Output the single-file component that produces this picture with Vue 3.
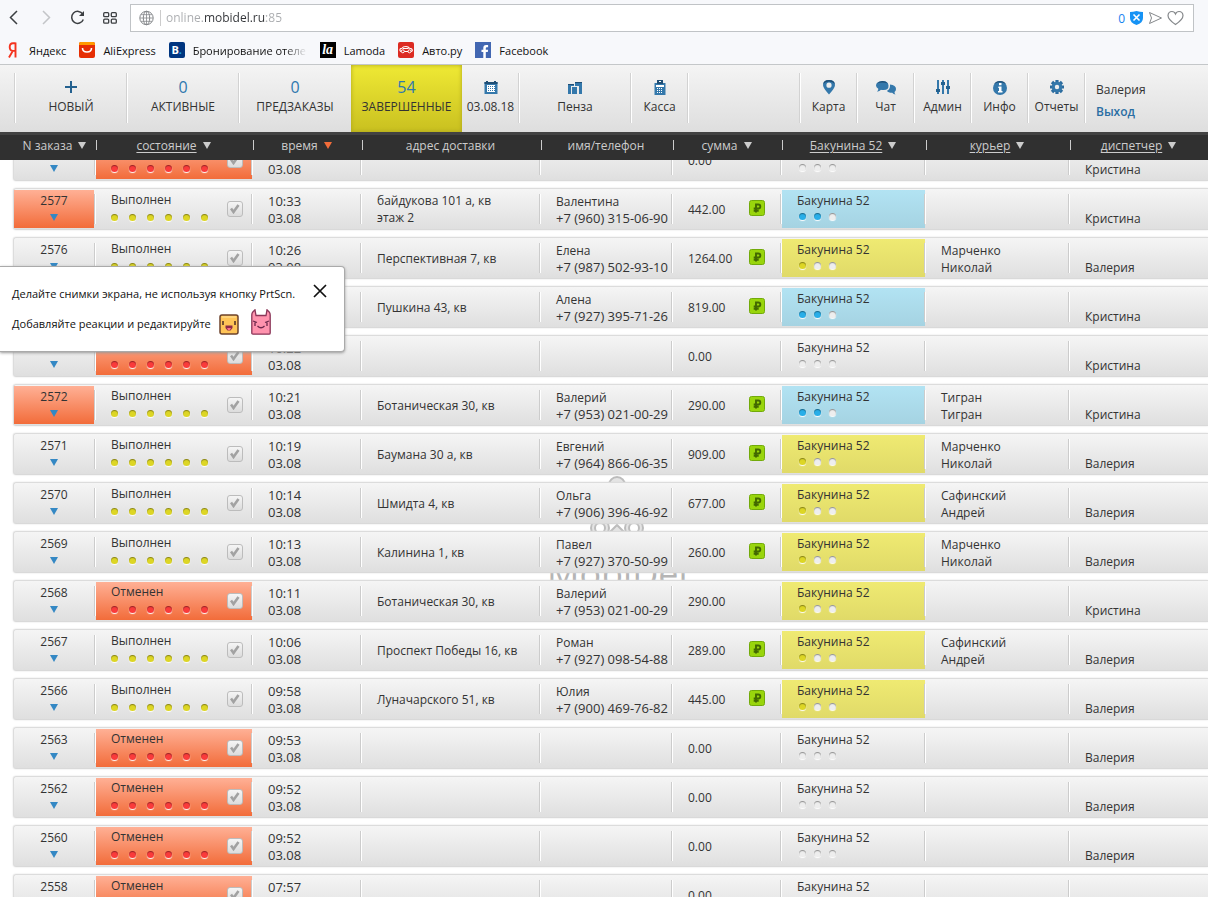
<script setup>
import { ref } from 'vue'

const address = ref('online.mobidel.ru:85')

const bookmarks = [
  { icon: 'yandex', text: 'Яндекс' },
  { icon: 'ali', text: 'AliExpress' },
  { icon: 'booking', text: 'Бронирование отелей', cut: true },
  { icon: 'lamoda', text: 'Lamoda' },
  { icon: 'auto', text: 'Авто.ру' },
  { icon: 'facebook', text: 'Facebook' }
]

const tools = [
  { icon: 'pin', text: 'Карта' },
  { icon: 'chat', text: 'Чат' },
  { icon: 'sliders', text: 'Админ' },
  { icon: 'info', text: 'Инфо' },
  { icon: 'gear', text: 'Отчеты' }
]

const columns = [
  { text: 'N заказа', sort: true },
  { text: 'состояние', sort: true, link: true },
  { text: 'время', sort: true, active: true },
  { text: 'адрес доставки' },
  { text: 'имя/телефон' },
  { text: 'сумма', sort: true },
  { text: 'Бакунина 52', sort: true, link: true },
  { text: 'курьер', sort: true, link: true },
  { text: 'диспетчер', sort: true, link: true }
]

const make = (id, done, time, address, client, phone, sum, paid, tone, lit, courier, operator, hot = false) => ({
  id, done, time, address, client, phone, sum, paid, tone, lit, courier, operator, hot
})

const orders = [
  make(2578, false, '10:35', '', '', '', '0.00', false, '', 0, '', 'Кристина'),
  make(2577, true, '10:33', 'байдукова 101 а, кв\nэтаж 2', 'Валентина', '+7 (960) 315-06-90', '442.00', true, 'blue', 2, '', 'Кристина', true),
  make(2576, true, '10:26', 'Перспективная 7, кв', 'Елена', '+7 (987) 502-93-10', '1264.00', true, 'yellow', 1, 'Марченко\nНиколай', 'Валерия'),
  make(2575, true, '10:24', 'Пушкина 43, кв', 'Алена', '+7 (927) 395-71-26', '819.00', true, 'blue', 2, '', 'Кристина'),
  make(2573, false, '10:22', '', '', '', '0.00', false, '', 0, '', 'Кристина'),
  make(2572, true, '10:21', 'Ботаническая 30, кв', 'Валерий', '+7 (953) 021-00-29', '290.00', true, 'blue', 2, 'Тигран\nТигран', 'Кристина', true),
  make(2571, true, '10:19', 'Баумана 30 а, кв', 'Евгений', '+7 (964) 866-06-35', '909.00', true, 'yellow', 1, 'Марченко\nНиколай', 'Валерия'),
  make(2570, true, '10:14', 'Шмидта 4, кв', 'Ольга', '+7 (906) 396-46-92', '677.00', true, 'yellow', 1, 'Сафинский\nАндрей', 'Валерия'),
  make(2569, true, '10:13', 'Калинина 1, кв', 'Павел', '+7 (927) 370-50-99', '260.00', true, 'yellow', 1, 'Марченко\nНиколай', 'Валерия'),
  make(2568, false, '10:11', 'Ботаническая 30, кв', 'Валерий', '+7 (953) 021-00-29', '290.00', false, 'yellow', 1, '', 'Кристина'),
  make(2567, true, '10:06', 'Проспект Победы 16, кв', 'Роман', '+7 (927) 098-54-88', '289.00', true, 'yellow', 1, 'Сафинский\nАндрей', 'Валерия'),
  make(2566, true, '09:58', 'Луначарского 51, кв', 'Юлия', '+7 (900) 469-76-82', '445.00', true, 'yellow', 1, '', 'Валерия'),
  make(2563, false, '09:53', '', '', '', '0.00', false, '', 0, '', 'Валерия'),
  make(2562, false, '09:52', '', '', '', '0.00', false, '', 0, '', 'Валерия'),
  make(2560, false, '09:52', '', '', '', '0.00', false, '', 0, '', 'Валерия'),
  make(2558, false, '07:57', '', '', '', '0.00', false, '', 0, '', 'Валерия')
]

const noticeOpen = ref(true)
</script>

<template>
  <div class="page">
    <header class="browser">
      <div class="bar">
        <button class="chrome-btn" aria-label="Назад">
          <svg width="16" height="16" viewBox="0 0 16 16"><path d="M11 1 4.500 7.500 11 14" fill="none" stroke="#3c3f42" stroke-width="1.500" /></svg>
        </button>
        <button class="chrome-btn" aria-label="Вперёд">
          <svg width="16" height="16" viewBox="0 0 16 16"><path d="M5 1 11.500 7.500 5 14" fill="none" stroke="#c3c5c8" stroke-width="1.500" /></svg>
        </button>
        <button class="chrome-btn" aria-label="Обновить">
          <svg width="16" height="16" viewBox="0 0 16 16"><path d="M12.800 4.200A6 6 0 1 0 13.300 9.500" fill="none" stroke="#3c3f42" stroke-width="1.500" /><path d="M14 1v5H9z" fill="#3c3f42" /></svg>
        </button>
        <button class="chrome-btn" aria-label="Экспресс-панель">
          <svg width="16" height="16" viewBox="0 0 16 16" fill="none" stroke="#3c3f42" stroke-width="1.300"><rect x="1.700" y="2.700" width="5" height="4" rx="1" /><rect x="9.300" y="2.700" width="5" height="4" rx="1" /><rect x="1.700" y="9.200" width="5" height="4" rx="1" /><rect x="9.300" y="9.200" width="5" height="4" rx="1" /></svg>
        </button>
        <div class="address">
          <svg width="16" height="16" viewBox="0 0 16 16" fill="none" stroke="#85888b"><circle cx="7.500" cy="8" r="6.700" /><ellipse cx="7.500" cy="8" rx="3.200" ry="6.700" /><path d="M7.500 1v14M1 8h13M2 4.700h11M2 11.300h11" stroke-width=".8" /></svg>
          <input v-model="address" class="url" type="text" aria-label="Адрес">
          <span class="blocked">0</span>
          <svg width="15" height="16" viewBox="0 0 15 16"><path d="M1 2q3 0 6.500-1Q11 2 14 2v6q0 5-6.500 7Q1 13 1 8z" fill="#1693f5" /><path d="m4.500 4.500 6 6m0-6-6 6" stroke="#fff" stroke-width="1.600" /></svg>
          <svg width="15" height="16" viewBox="0 0 15 16"><path d="M1.500 2.500 13.500 8l-12 5.500L3.500 8z" fill="none" stroke="#85888b" /></svg>
          <svg width="17" height="16" viewBox="0 0 17 16"><path d="M8.500 14.500Q1 9.500 1 5.500 1.300 1.500 5 1.500q2.500 0 3.500 2.500 1-2.500 3.500-2.500 3.700 0 4 4 0 4-7.500 9z" fill="none" stroke="#85888b" stroke-width="1.200" /></svg>
        </div>
      </div>
      <nav class="bookmarks">
        <a v-for="b in bookmarks" :key="b.text" href="#" class="bookmark">
          <svg v-if="b.icon === 'yandex'" width="16" height="16" viewBox="0 0 16 16"><path d="M10.500 .5v15M10.500 1.300H8q-3.300 0-3.300 3.800T8 8.900h2.500M7.800 8.900 4 15.500" fill="none" stroke="#f4331f" stroke-width="1.900" /></svg>
          <svg v-else-if="b.icon === 'ali'" width="16" height="16" viewBox="0 0 16 16"><rect width="16" height="16" rx="2" fill="#e62e04" /><path d="M0 3V2q0-2 2-2h12q2 0 2 2v1z" fill="#ff9a00" /><path d="M3.500 6q0 4 4.500 4t4.500-4" fill="none" stroke="#fff" stroke-width="1.600" /></svg>
          <span v-else-if="b.icon === 'booking'" class="favicon booking">B<i>.</i></span>
          <span v-else-if="b.icon === 'lamoda'" class="favicon lamoda">la</span>
          <svg v-else-if="b.icon === 'auto'" width="16" height="16" viewBox="0 0 16 16"><rect width="16" height="16" rx="2" fill="#dc2b22" /><path d="M2 8.500q-.5-2 2-2.300Q5 4.500 8 4.500q2.500 0 3.500 1.800 3 .2 2.800 2.200-.3 1-1.500 1H4Q2 9.500 2 8.500zM5 6.500h5.500" fill="none" stroke="#fff" stroke-width="1.100" /><circle cx="4.800" cy="9.300" r="1.500" fill="#dc2b22" stroke="#fff" /><circle cx="11.500" cy="9.300" r="1.500" fill="#dc2b22" stroke="#fff" /></svg>
          <svg v-else width="16" height="16" viewBox="0 0 16 16"><rect width="16" height="16" fill="#4267b2" /><path d="M8.300 16v-6H6.500V7.700h1.800V6q0-3 2.800-3h2v2.200h-1.300q-1 0-1 1v1.500h2.300l-.3 2.300h-2v6z" fill="#fff" /></svg>
          <span :class="{ cut: b.cut }">{{ b.text }}</span>
        </a>
      </nav>
    </header>

    <nav class="menu">
      <a href="#" class="tab wide">
        <svg width="14" height="18" viewBox="0 0 14 18"><path d="M7 4v12M1 10h12" stroke="#24618f" stroke-width="2" /></svg>
        <span>НОВЫЙ</span>
      </a>
      <a href="#" class="tab wide"><b>0</b><span>АКТИВНЫЕ</span></a>
      <a href="#" class="tab wide"><b>0</b><span>ПРЕДЗАКАЗЫ</span></a>
      <a href="#" class="tab current"><b>54</b><span>ЗАВЕРШЕННЫЕ</span></a>
      <button class="tab narrow plain">
        <svg width="14" height="18" viewBox="0 0 14 18"><path d="M.5 5h13v12H.5z" fill="#3478ab" /><path d="M.5 5h13v2H.5zM2 4h2v2H2zm8 0h2v2h-2z" fill="#1f4e75" /><path d="M3 8h8v7H3z" fill="#fff" /><path d="M4 9.500h7M4 11.500h7M4 13.500h7" stroke="#3478ab" stroke-dasharray="1 1" /></svg>
        <span>03.08.18</span>
      </button>
      <button class="tab wide">
        <svg width="16" height="18" viewBox="0 0 16 18"><path d="M1 7h6v2H4v8H1zM8 5h7v12h-3V9H8zM5 10h5v7H5z" fill="#3478ab" /><path d="M1 7h6v1H1zM8 5h7v1H8z" fill="#1f4e75" /></svg>
        <span>Пенза</span>
      </button>
      <a href="#" class="tab narrow">
        <svg width="14" height="18" viewBox="0 0 14 18"><path d="M1.500 6h11v12h-11z" fill="#3478ab" /><path d="M4 3h6v4H4z" fill="#1f4e75" /><path d="M6 4h2v1H6zM3 8h8v2H3z" fill="#fff" /><path d="M4 11.500h6M4 13.500h6M4 15.500h6" stroke="#fff" stroke-dasharray="1 1" /></svg>
        <span>Касса</span>
      </a>
      <span class="spacer" />
      <a v-for="t in tools" :key="t.icon" href="#" class="tab narrow">
        <svg v-if="t.icon === 'pin'" width="14" height="18" viewBox="0 0 14 18"><path fill-rule="evenodd" d="M7 3q6 0 6 5 0 3-6 9.500Q1 11 1 8q0-5 6-5zm0 2.600a2.600 2.600 0 1 0 0 5.200 2.600 2.600 0 0 0 0-5.200z" fill="#3478ab" /><path d="M1.200 7Q2 3 7 3t5.800 4Q11 4.500 7 4.500T1.200 7z" fill="#1f4e75" /></svg>
        <svg v-else-if="t.icon === 'chat'" width="22" height="18" viewBox="0 0 22 18"><path d="M1 8.500Q1 4.500 7 4t6.500 4.500-6 4.500q-1 0-1.500-.2Q4 15 2 14.500q1.500-1 1.300-2.700Q1 10.500 1 8.500z" fill="#3478ab" /><path d="M15 7.500q6 .5 6 4.500 0 2-1.500 3 0 1.500 1 2.500-2 0-3.300-1.700Q13 15.800 12 13.800q3-1.500 3-5z" fill="#3478ab" /><path d="M2 6.500Q4 4 7.500 4T13 6.500Q7 4.300 2 6.500z" fill="#1f4e75" /></svg>
        <svg v-else-if="t.icon === 'sliders'" width="16" height="18" viewBox="0 0 16 18"><path d="M3 3v14M8 3v14M13 3v14" stroke="#3478ab" stroke-width="2" /><path d="M1 13.500h4M6 6.500h4M11 10.500h4" stroke="#24618f" stroke-width="3" /></svg>
        <svg v-else-if="t.icon === 'info'" width="16" height="18" viewBox="0 0 16 18"><circle cx="8" cy="11" r="7" fill="#3478ab" /><path d="M2 7q2-3 6-3t6 3Q8 3.500 2 7z" fill="#1f4e75" /><path d="M7 6h2.500v2.300H7zM6.500 9.500h3V14h1v1.500H6V14h1v-3h-.8z" fill="#fff" /></svg>
        <svg v-else width="16" height="18" viewBox="0 0 16 18"><path d="M8 3v14M1 10h14M3 5l10 10M13 5 3 15" stroke="#2c6c9e" stroke-width="3.200" /><circle cx="8" cy="10" r="3.700" fill="#eee" stroke="#3478ab" stroke-width="3" /></svg>
        <span>{{ t.text }}</span>
      </a>
      <div class="user"><span>Валерия</span><a href="#">Выход</a></div>
    </nav>

    <main class="orders">
      <div class="watermark" aria-hidden="true">
        <svg width="60" height="82" viewBox="0 0 60 82" fill="#e4e4e4" stroke="#bcbcbc" stroke-width="2"><circle cx="30" cy="10" r="8" /><circle cx="13" cy="53" r="9" /><circle cx="47" cy="53" r="9" /><circle cx="13" cy="53" r="5" fill="#fff" /><circle cx="47" cy="53" r="5" fill="#fff" /><path d="m22 58 8-8 8 8z" /></svg>
        <span>MobiDel</span>
      </div>
      <table>
        <thead>
          <tr class="grid">
            <th v-for="c in columns" :key="c.text" scope="col">
              <button v-if="c.sort" :class="{ active: c.active }"><span :class="{ link: c.link }">{{ c.text }}</span><i /></button>
              <template v-else>{{ c.text }}</template>
            </th>
          </tr>
        </thead>
        <tbody>
          <tr v-for="o in orders" :key="o.id" class="grid">
            <td class="number" :class="{ orange: o.hot }">
              {{ o.id }}
              <button :aria-label="'Открыть заказ ' + o.id"><i /></button>
            </td>
            <td class="state" :class="{ orange: !o.done }">
              <div>
                <span>{{ o.done ? 'Выполнен' : 'Отменен' }}</span>
                <span class="dots"><i v-for="n in 6" :key="n" :class="o.done ? 'lime' : 'red'" /></span>
              </div>
              <label class="check">
                <input type="checkbox" checked :aria-label="'Заказ ' + o.id">
                <svg width="10" height="10" viewBox="0 0 10 10"><path d="M1 4.500 3.500 8 8.500 1" fill="none" stroke="#a2a2a2" stroke-width="2.600" /></svg>
              </label>
            </td>
            <td class="lines figures">{{ o.time }}<br>03.08</td>
            <td class="middle">{{ o.address }}</td>
            <td class="lines">{{ o.client }}<br><span class="figures">{{ o.phone }}</span></td>
            <td class="middle sum">
              {{ o.sum }}
              <svg v-if="o.paid" width="16" height="16" viewBox="0 0 16 16"><rect x=".5" y=".5" width="15" height="15" rx="2" fill="#99d50c" stroke="#72aa0a" /><path d="M7 12.500V4.500h2.300q2 0 2 2t-2 2H4.700M4.700 10.700h5" fill="none" stroke="#426800" stroke-width="1.900" /></svg>
            </td>
            <td class="branch" :class="o.tone">
              <span>Бакунина 52</span>
              <span class="dots"><i v-for="n in 3" :key="n" :class="n > o.lit ? 'off' : o.tone === 'blue' ? 'sky' : 'lime'" /></span>
            </td>
            <td class="lines">{{ o.courier }}</td>
            <td class="operator">{{ o.operator }}</td>
          </tr>
        </tbody>
      </table>
    </main>

    <aside v-if="noticeOpen" class="notice">
      <div>
        <p>Делайте снимки экрана, не используя кнопку PrtScn.</p>
        <p class="second">
          Добавляйте реакции и редактируйте
          <svg width="20" height="26" viewBox="0 0 20 26"><rect x="1" y="6" width="18" height="19" rx="2" fill="#ffc457" stroke="#6d432c" stroke-width="1.500" /><path d="M3 8h14" stroke="#ffe3a0" /><path d="M4 12v4M16 12v4" stroke="#4b2b25" stroke-width="1.500" /><path d="M6.500 16.500h7V19l-2 2.500h-3l-2-2.500z" fill="#8d2a48" /><path d="M8 19h4l-1 2H9z" fill="#ff7088" /></svg>
          <svg width="20" height="26" viewBox="0 0 20 26"><path d="M.8 24V6q0-2 1-3L4 .8l1 5.700h10L16 .8 18.200 3q1 1 1 3v18q0 1.200-1.200 1.200H2Q.8 25.200.8 24z" fill="#ff93ae" stroke="#8a3658" stroke-width="1.300" /><path d="M2 12l4 1.500M4 13.500V17M18 12l-4 1.500M16 13.500V17M6.500 17q3.500 3.500 7 0" fill="none" stroke="#6d294c" stroke-width="1.300" /></svg>
        </p>
      </div>
      <button aria-label="Закрыть" @click="noticeOpen = false">
        <svg width="14" height="14" viewBox="0 0 14 14"><path d="m1 1 12 12M13 1 1 13" stroke="#111" stroke-width="1.700" /></svg>
      </button>
    </aside>
  </div>
</template>

<style>
html, body { margin: 0; background: #fff; }
</style>

<style scoped>
* { box-sizing: border-box; }
.page { position: relative; height: 100vh; overflow: hidden; background: #fff; color: #333; font: 12px/17px "Open Sans", "Noto Sans", sans-serif; }
button { margin: 0; padding: 0; border: 0; background: none; font: inherit; color: inherit; cursor: pointer; }
a { color: inherit; text-decoration: none; }
svg { display: block; flex: none; }

.browser { height: 65px; padding-top: 4px; border-bottom: 1px solid #c4c7c9; background: #f7f8fb; color: #111; font-size: 11px; }
.bar { display: flex; align-items: center; gap: 16px; padding: 0 14px 0 6px; }
.chrome-btn { width: 16px; height: 16px; }
.address { display: flex; flex: 1; align-items: center; gap: 4px; height: 28px; margin-left: -4px; padding: 0 9px 0 8px; border: 1px solid #c0c3c6; background: #fff; }
.url { flex: 1; min-width: 0; height: 16px; margin-left: 1px; padding: 0 0 0 5px; border: 0; border-left: 1px solid #ccc; outline: 0; color: transparent; background: linear-gradient(90deg, #a9abae 43px, #303236 43px, #303236 105px, #a9abae 105px); background-clip: text; font: 12px/16px "Open Sans", "Noto Sans", sans-serif; }
.blocked { color: #1683f0; font-size: 12px; }
.bookmarks { display: flex; gap: 13px; padding: 10px 5px; }
.bookmark { display: flex; align-items: center; gap: 8px; height: 16px; white-space: nowrap; }
.cut { width: 114px; overflow: hidden; mask-image: linear-gradient(90deg, #000 92px, transparent 114px); }
.favicon { width: 16px; height: 16px; color: #fff; text-align: center; }
.booking { border-radius: 2px; background: #003580; font: bold 11px/16px "Open Sans", sans-serif; }
.booking i { color: #1ba0e8; font-style: normal; }
.lamoda { background: #000; font: italic bold 14px/15px "Liberation Serif", serif; }

.menu { display: flex; height: 67px; padding-left: 15px; background: linear-gradient(#f4f4f4, #dedede); }
.tab { position: relative; display: flex; flex: none; flex-direction: column; align-items: center; padding-top: 12px; white-space: nowrap; }
.tab::before, .spacer::before, .user::before { content: ""; position: absolute; left: -1px; top: 8px; width: 2px; height: 50px; background: linear-gradient(90deg, #d2d2d2 1px, #fff 1px); }
.tab b { height: 21px; color: #2f78ae; font-size: 16px; font-weight: 400; line-height: 20px; }
.tab svg { margin-bottom: 3px; }
.wide { width: 112px; }
.narrow { width: 57px; }
.current { width: 111px; background: linear-gradient(#efe934, #c9c020); box-shadow: inset 0 0 4px #aaa21b; }
.current::before, .plain::before { display: none; }
.spacer { position: relative; flex: 1; }
.user { position: relative; display: flex; flex-direction: column; gap: 5px; width: 123px; padding: 16px 0 0 11px; }
.user a { color: #2b6ea3; font-weight: 600; }

.orders { position: relative; z-index: 0; }
table, thead, tbody { display: block; }
.grid { display: grid; grid-template-columns: 81fr 157fr 109fr 179fr 132fr 109fr 144fr 144fr 139fr; }
thead { position: relative; z-index: 1; height: 28px; padding-left: 14px; border-top: 3px solid #424242; background: #303030; color: #ccc; }
th { position: relative; display: flex; justify-content: center; min-width: 0; padding-top: 2px; font-weight: 400; white-space: nowrap; }
th + th::before { content: ""; position: absolute; left: 1px; top: 5px; width: 1px; height: 10px; background: #ccc; }
th button { display: flex; align-items: center; gap: 6px; }
th i, .number i { width: 0; height: 0; border: solid transparent; border-width: 7px 4px 0; border-top-color: #ccc; }
.active i { border-top-color: #f26c3a; }
.link { text-decoration: underline; text-underline-offset: 2px; }

tbody { display: grid; gap: 7px; margin-top: -21px; padding-left: 13px; }
tbody tr { height: 42px; border: 1px solid #dcdcdc; border-right: 0; border-bottom-color: #d9d9d9; border-radius: 3px 0 0 3px; background: linear-gradient(#f5f5f5, #dfdfdf); box-shadow: 0 0 2px #ddd; }
td { position: relative; min-width: 0; margin: 1px 0 1px 1px; padding: 0 0 0 15px; white-space: pre-line; }
td + td::before { content: ""; position: absolute; left: -2px; top: 4px; width: 2px; height: 30px; background: linear-gradient(90deg, #ccc 1px, #fff 1px); }
.number { display: flex; flex-direction: column; align-items: center; margin: 1px 1px 1px 0; padding: 2px 0 0; }
.number button { display: flex; padding: 5px; }
.number i { border-top-color: #3488c4; }
.orange { background: linear-gradient(#ffb095, #f26c3a); }
.state { display: flex; justify-content: space-between; padding-top: 1px; padding-right: 9px; }
.state > div, .branch { display: flex; flex-direction: column; }
.dots { display: flex; gap: 8px; }
.state .dots { gap: 11px; padding-top: 6px; }
.dots i { width: 7px; height: 7px; border-radius: 50%; box-shadow: 0 1px 1px #fff, inset 0 1px 1px rgba(0, 0, 0, .4); }
.lime { background: #ddd625; }
.red { background: #fa3b3b; }
.sky { background: #28aee8; }
.off { background: #eee; }
.check { position: relative; width: 16px; height: 16px; margin-top: 10px; }
.check input { display: block; width: 16px; height: 16px; margin: 0; border: 1px solid #bcbcbc; border-radius: 3px; appearance: none; background: linear-gradient(#f5f5f5, #dcdcdc); }
.check svg { position: absolute; inset: 3px; pointer-events: none; }
.lines { padding-top: 3px; }
.figures { font-size: 13px; }
.middle { display: flex; align-items: center; }
.sum { justify-content: space-between; padding-right: 16px; }
.sum svg { margin-bottom: 2px; }
.branch { padding-top: 2px; }
.branch .dots { padding: 4px 0 0 2px; }
.blue { background: linear-gradient(#b2e3f3, #a5d3e2); }
.yellow { background: linear-gradient(#efea72, #e0da68); }
.operator { display: flex; align-items: flex-end; padding-bottom: 1px; }

.watermark { position: absolute; z-index: -1; left: calc(50% - 57px); top: 343px; display: flex; flex-direction: column; align-items: center; color: #b5b5b5; font: 36px/34px "Open Sans", sans-serif; }

.notice { position: absolute; z-index: 3; left: 0; top: 266px; display: flex; align-items: flex-start; gap: 18px; padding: 17px 17px 13px 12px; border: 1px solid #aaa; border-left: 0; border-radius: 0 4px 4px 0; background: #fff; box-shadow: 0 1px 3px #999; color: #111; font-size: 11px; }
.notice p { height: 26px; margin: 0; line-height: 20px; white-space: nowrap; }
.notice .second { display: flex; align-items: center; gap: 8px; height: 28px; }
.notice .second svg { margin-bottom: 4px; }
.notice svg + svg { margin-left: 4px; }
</style>
